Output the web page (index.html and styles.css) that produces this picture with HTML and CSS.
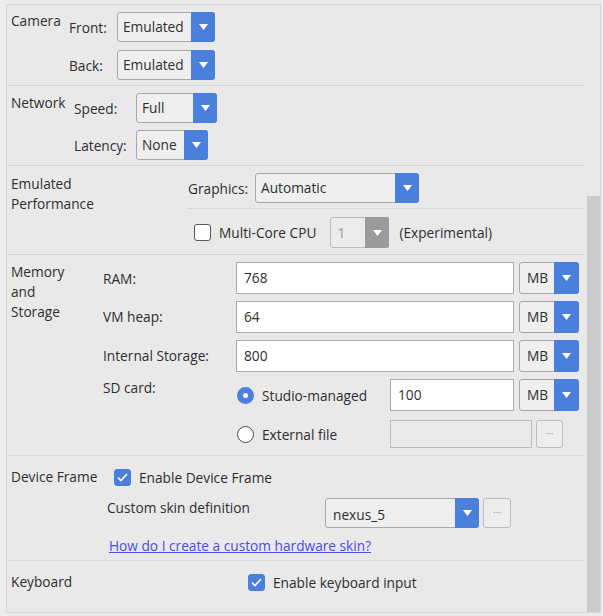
FILE: index.html
```
<!DOCTYPE html>
<html>
<head>
<meta charset="utf-8">
<link rel="stylesheet" href="styles.css">
</head>
<body>
<div class="panel">
  <div class="content">

    <div class="section s-camera">
      <div class="sec-label">Camera</div>
      <div class="sec-body gap8">
        <div class="row">
          <span class="row-label w48">Front:</span>
          <div class="combo c-cam"><span class="combo-text">Emulated</span><span class="combo-arrow"><svg width="9" height="6" viewBox="0 0 9 6"><path d="M0 0H9L4.5 6Z" fill="#fff"/></svg></span></div>
        </div>
        <div class="row">
          <span class="row-label w48">Back:</span>
          <div class="combo c-cam"><span class="combo-text">Emulated</span><span class="combo-arrow"><svg width="9" height="6" viewBox="0 0 9 6"><path d="M0 0H9L4.5 6Z" fill="#fff"/></svg></span></div>
        </div>
      </div>
    </div>

    <div class="section s-network">
      <div class="sec-label">Network</div>
      <div class="sec-body gap7">
        <div class="row">
          <span class="row-label w62">Speed:</span>
          <div class="combo c-speed"><span class="combo-text">Full</span><span class="combo-arrow"><svg width="9" height="6" viewBox="0 0 9 6"><path d="M0 0H9L4.5 6Z" fill="#fff"/></svg></span></div>
        </div>
        <div class="row">
          <span class="row-label w62">Latency:</span>
          <div class="combo c-latency"><span class="combo-text">None</span><span class="combo-arrow"><svg width="9" height="6" viewBox="0 0 9 6"><path d="M0 0H9L4.5 6Z" fill="#fff"/></svg></span></div>
        </div>
      </div>
    </div>

    <div class="section s-perf">
      <div class="sec-label">Emulated<br>Performance</div>
      <div class="sec-body">
        <div class="row">
          <span class="row-label w68">Graphics:</span>
          <div class="combo c-graphics"><span class="combo-text">Automatic</span><span class="combo-arrow"><svg width="9" height="6" viewBox="0 0 9 6"><path d="M0 0H9L4.5 6Z" fill="#fff"/></svg></span></div>
        </div>
        <div class="inner-sep"></div>
        <div class="row multi">
          <span class="check"></span>
          <span class="check-text">Multi-Core CPU</span>
          <div class="combo combo-disabled c-cores"><span class="combo-text">1</span><span class="combo-arrow"><svg width="9" height="6" viewBox="0 0 9 6"><path d="M0 0H9L4.5 6Z" fill="#fff"/></svg></span></div>
          <span class="experimental">(Experimental)</span>
        </div>
      </div>
    </div>

    <div class="section s-memory">
      <div class="sec-label">Memory<br>and<br>Storage</div>
      <div class="mem-grid">
        <span class="mem-label">RAM:</span>
        <div class="mem-field"><div class="input i-wide">768</div><div class="combo c-mb"><span class="combo-text">MB</span><span class="combo-arrow"><svg width="9" height="6" viewBox="0 0 9 6"><path d="M0 0H9L4.5 6Z" fill="#fff"/></svg></span></div></div>

        <span class="mem-label">VM heap:</span>
        <div class="mem-field"><div class="input i-wide">64</div><div class="combo c-mb"><span class="combo-text">MB</span><span class="combo-arrow"><svg width="9" height="6" viewBox="0 0 9 6"><path d="M0 0H9L4.5 6Z" fill="#fff"/></svg></span></div></div>

        <span class="mem-label">Internal Storage:</span>
        <div class="mem-field"><div class="input i-wide">800</div><div class="combo c-mb"><span class="combo-text">MB</span><span class="combo-arrow"><svg width="9" height="6" viewBox="0 0 9 6"><path d="M0 0H9L4.5 6Z" fill="#fff"/></svg></span></div></div>

        <span class="mem-label sd-label">SD card:</span>
        <div class="sd-options">
          <div class="mem-field">
            <label class="radio-opt"><span class="radio radio-on"></span><span>Studio-managed</span></label>
            <div class="input i-sd">100</div>
            <div class="combo c-mb"><span class="combo-text">MB</span><span class="combo-arrow"><svg width="9" height="6" viewBox="0 0 9 6"><path d="M0 0H9L4.5 6Z" fill="#fff"/></svg></span></div>
          </div>
          <div class="mem-field file-field">
            <label class="radio-opt"><span class="radio"></span><span>External file</span></label>
            <div class="input input-disabled i-file"></div>
            <div class="dots-btn">···</div>
          </div>
        </div>
      </div>
    </div>

    <div class="section s-frame">
      <div class="frame-grid">
        <span class="frame-label">Device Frame</span>
        <div class="row frame-check"><span class="check check-on"><svg width="11" height="9" viewBox="0 0 11 9"><path d="M1 4.6L4 7.5L10 1" fill="none" stroke="#fff" stroke-width="1.6"/></svg></span><span class="check-text">Enable Device Frame</span></div>
        <span></span>
        <div class="row skin-row">
          <span class="skin-label">Custom skin definition</span>
          <div class="combo c-skin"><span class="combo-text">nexus_5</span><span class="combo-arrow"><svg width="9" height="6" viewBox="0 0 9 6"><path d="M0 0H9L4.5 6Z" fill="#fff"/></svg></span></div>
          <div class="dots-btn tall">···</div>
        </div>
        <span></span>
        <a class="link" href="#">How do I create a custom hardware skin?</a>
      </div>
    </div>

    <div class="section s-keyboard">
      <div class="sec-label">Keyboard</div>
      <div class="row"><span class="check check-on"><svg width="11" height="9" viewBox="0 0 11 9"><path d="M1 4.6L4 7.5L10 1" fill="none" stroke="#fff" stroke-width="1.6"/></svg></span><span class="check-text">Enable keyboard input</span></div>
    </div>

  </div>
  <div class="scrollbar"><div class="thumb"></div></div>
</div>
</body>
</html>
```

FILE: styles.css
```
* { box-sizing: border-box; }
html, body { margin: 0; padding: 0; }
body {
  background: #ececec;
  font-family: "Open Sans", "Noto Sans", sans-serif;
  font-size: 13.7px;
  color: #2e2e2e;
  width: 603px;
  height: 616px;
  overflow: hidden;
}
.panel {
  margin: 4px 0 0 6px;
  width: 595px;
  height: 609px;
  border: 1px solid #d4d4d4;
  background: #e9e9e9;
  display: flex;
}
.content {
  flex: 1;
  padding: 0 3px 0 1px;
}
.scrollbar {
  width: 13px;
  display: flex;
  flex-direction: column;
}
.thumb {
  margin-top: 191px;
  flex: 1;
  background: #cccccc;
}

.section {
  display: flex;
  border-bottom: 1px solid #d6d6d6;
  padding-left: 3px;
}
.sec-label { line-height: 20px; flex: none; }
.sec-body { display: flex; flex-direction: column; }
.gap8 { gap: 8px; }
.gap7 { gap: 7px; }
.row { display: flex; align-items: center; }
.row-label { flex: none; }
.w48 { width: 48px; }
.w62 { width: 62px; }
.w68 { width: 68px; }

.s-camera { padding-top: 7px; padding-bottom: 5px; }
.s-camera .sec-label { width: 58px; margin-top: -1px; }
.s-network { padding-top: 7px; padding-bottom: 5px; }
.s-network .sec-label { width: 63px; margin-top: 0; }
.s-perf { padding-top: 7px; padding-bottom: 6px; }
.s-perf .sec-label { width: 176px; padding-top: 1px; }
.s-perf .sec-body { flex: 1; }
.s-perf .row-label { padding-left: 1px; }
.inner-sep { height: 1px; background: #d6d6d6; margin: 5px 0 8px; }
.multi { height: 31px; padding-left: 7px; }
.multi .check-text { margin-left: 8px; }
.c-cores { margin-left: 14px; }
.experimental { margin-left: 10px; }

.s-memory { padding-top: 7px; padding-bottom: 5px; }
.s-memory .sec-label { width: 92px; margin-top: 0; }
.mem-grid {
  display: grid;
  grid-template-columns: 133px auto;
  row-gap: 6px;
  align-items: center;
}
.mem-field { display: flex; align-items: center; height: 32px; gap: 5px; }
.mem-grid > .mem-field:nth-child(4),
.mem-grid > .mem-field:nth-child(6) { margin-top: 1px; }
.sd-label { align-self: start; margin-top: 0px; }
.sd-options { display: flex; flex-direction: column; gap: 7px; margin-top: 1px; }
.radio-opt { display: flex; align-items: center; width: 149px; padding-left: 1px; }
.radio-opt .radio { margin-right: 8px; }
.file-field { gap: 4px; }
.file-field .radio-opt { width: 150px; }

.s-frame { padding-top: 11px; padding-bottom: 5px; }
.frame-grid {
  display: grid;
  grid-template-columns: 96px auto;
}
.frame-label { line-height: 20px; }
.frame-check { height: 20px; padding-left: 7px; }
.frame-check .check-text { margin-left: 8px; }
.skin-row { margin-top: 11px; align-items: flex-start; }
.skin-label { width: 218px; line-height: 20px; }
.c-skin { margin-right: 4px; }
.link {
  margin-top: 9px;
  line-height: 18px;
  padding-left: 2px;
  color: #4a4af2;
  text-decoration: underline;
}

.s-keyboard { padding-top: 11px; border-bottom: none; }
.s-keyboard .sec-label { width: 237px; }
.s-keyboard .check-text { margin-left: 8px; }

/* combo box */
.combo {
  display: flex;
  height: 30px;
  border: 1px solid #a8a8a8;
  border-radius: 3px;
  background: #efefef;
  flex: none;
}
.combo-text {
  flex: 1;
  padding-left: 5px;
  line-height: 28px;
  white-space: nowrap;
  overflow: hidden;
}
.combo-arrow {
  width: 24px;
  margin: -1px -1px -1px 0;
  background: #4a80db;
  border-radius: 0 3px 3px 0;
  display: flex;
  align-items: center;
  justify-content: center;
}
.c-cam { width: 98px; }
.c-speed { width: 81px; }
.c-latency { width: 72px; }
.c-graphics { width: 164px; }
.c-cores { width: 59px; height: 31px; }
.c-mb { width: 60px; height: 32px; }
.c-mb .combo-text { line-height: 30px; padding-left: 7px; }
.c-mb .combo-arrow { width: 25px; }
.c-skin { width: 154px; height: 30px; }
.c-skin .combo-text { line-height: 30px; padding-left: 7px; padding-top: 1px; }
.combo-disabled { border-color: #bdbdbd; background: #ececec; color: #9a9a9a; }
.combo-disabled .combo-arrow { background: #9b9b9b; border-radius: 0 2px 2px 0; }
.combo-disabled .combo-text { line-height: 29px; padding-left: 6px; }

/* inputs */
.input {
  height: 32px;
  border: 1px solid #ababab;
  background: #fff;
  padding-left: 7px;
  line-height: 30px;
  flex: none;
}
.i-wide { width: 278px; }
.i-sd { width: 124px; }
.i-file { width: 142px; height: 28px; }
.input-disabled { background: #eaeaea; border-color: #bcbcbc; }
.dots-btn {
  width: 27px;
  height: 28px;
  border: 1px solid #bcbcbc;
  border-radius: 3px;
  background: #ededed;
  color: #9c9c9c;
  font-size: 10px;
  text-align: center;
  line-height: 24px;
  flex: none;
}
.dots-btn.tall { width: 28px; height: 30px; line-height: 26px; }

/* checkbox & radio */
.check {
  width: 17px;
  height: 17px;
  border: 1px solid #5a5a5a;
  border-radius: 3px;
  background: #fff;
  flex: none;
  display: flex;
  align-items: center;
  justify-content: center;
}
.check-on { background: #4a80db; border-color: #4a80db; }
.radio {
  width: 17px;
  height: 17px;
  border-radius: 50%;
  border: 1px solid #4a4a4a;
  background: #fff;
  flex: none;
}
.radio-on {
  border: 6px solid #4a80db;
  background: #fff;
}
```
